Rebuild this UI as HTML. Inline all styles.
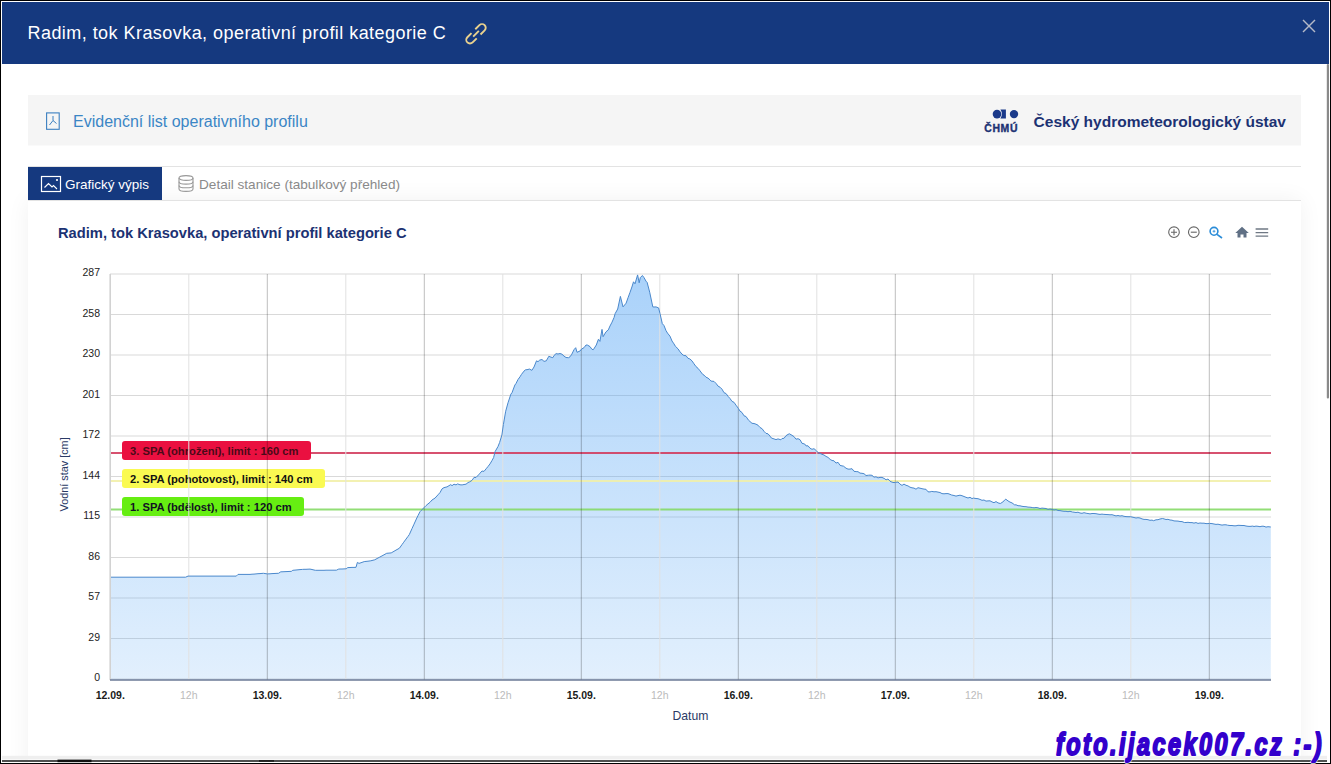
<!DOCTYPE html>
<html><head><meta charset="utf-8">
<style>
*{margin:0;padding:0;box-sizing:border-box}
html,body{width:1331px;height:764px;overflow:hidden;background:#000}
#frame{position:absolute;left:1px;top:1px;width:1329px;height:762px;background:#fff;overflow:hidden}
#card{position:absolute;left:27px;top:199px;width:1273px;height:580px;background:#fff;box-shadow:0 0 22px rgba(0,0,0,0.06)}
svg text{font-family:"Liberation Sans",sans-serif}
.dl{font-weight:bold;fill:#1a1a1a;text-anchor:middle} .hl{fill:#bbb;text-anchor:middle}
</style></head><body>
<div id="frame">
<div id="card"></div>
</div>
<svg style="position:absolute;left:0;top:0" width="1331" height="764" viewBox="0 0 1331 764">
<defs><linearGradient id="ag" x1="0" y1="0" x2="0" y2="1"><stop offset="0" stop-color="#55a5f5" stop-opacity="0.5"/><stop offset="1" stop-color="#55a5f5" stop-opacity="0.17"/></linearGradient></defs>
<!-- header -->
<rect x="2" y="2" width="1327" height="62" fill="#15397f"/>
<text x="27.5" y="38.9" font-size="18" letter-spacing="0.45" fill="#fff">Radim, tok Krasovka, operativní profil kategorie C</text>
<g transform="translate(476,33.8) rotate(45) scale(1.12)" fill="none" stroke="#ead28e" stroke-width="1.7" stroke-linecap="butt"><path d="M-3.3 -2.4 V-7.6 A3.3 3.3 0 0 1 3.3 -7.6 V-2.4"/><path d="M-3.3 2.4 V7.6 A3.3 3.3 0 0 0 3.3 7.6 V2.4"/><path d="M0 -3.6 V3.6"/></g>
<g stroke="#b4b9c8" stroke-width="1.4"><line x1="1303" y1="20" x2="1315" y2="32"/><line x1="1315" y1="20" x2="1303" y2="32"/></g>
<!-- evidence bar -->
<rect x="28" y="95" width="1273" height="50.5" fill="#f5f5f5"/>
<g fill="none" stroke="#3b7fc0"><rect x="46.6" y="112.9" width="12.6" height="16.4" stroke-width="1.1"/><path d="M53 116 L53 120.5 L49.5 125 M53 120.5 L56.5 123.5" stroke-width="1"/></g>
<text x="73" y="127" font-size="16" fill="#3b86c5">Evidenční list operativního profilu</text>
<circle cx="997" cy="114.1" r="4.3" fill="#1b3a8a"/><path d="M1000.4 109.6 Q1003.4 114.1 1000.4 118.6 L1005.9 118.6 L1005.9 109.6 Z" fill="#1b3a8a"/><circle cx="1014" cy="114.1" r="4.2" fill="#1b3a8a"/>
<text x="984.3" y="131.7" font-size="10.2" font-weight="bold" letter-spacing="0.6" fill="#1c3273" stroke="#1c3273" stroke-width="0.35" textLength="33.8" lengthAdjust="spacingAndGlyphs">ČHMÚ</text>
<text x="1286" y="126.6" font-size="15.5" font-weight="bold" fill="#1c3273" text-anchor="end">Český hydrometeorologický ústav</text>
<!-- tabs -->
<line x1="28" x2="1301" y1="166.5" y2="166.5" stroke="#e3e3e3"/>
<line x1="28" x2="1301" y1="200.5" y2="200.5" stroke="#e3e3e3"/>
<rect x="28" y="167" width="134" height="33" fill="#15397f"/>
<g fill="none" stroke="#fff"><rect x="41.5" y="176.5" width="19" height="15" stroke-width="1.2"/><path d="M44.5 187.5 L48.5 183.5 L52 187 L53.5 185.5 L57 189" stroke-width="1.1"/></g><circle cx="57" cy="180" r="1.1" fill="#fff"/>
<text x="65" y="188.5" font-size="13.5" fill="#fff">Grafický výpis</text>
<g fill="none" stroke="#999" stroke-width="1.1" transform="translate(178,175)"><ellipse cx="8" cy="3" rx="7" ry="2.4"/><path d="M1 3 V14 A7 2.4 0 0 0 15 14 V3"/><path d="M1 6.7 A7 2.4 0 0 0 15 6.7"/><path d="M1 10.4 A7 2.4 0 0 0 15 10.4"/></g>
<text x="199" y="189.1" font-size="13.6" fill="#8a8a8a">Detail stanice (tabulkový přehled)</text>
<!-- chart -->
<text x="58" y="238.2" font-size="14.7" font-weight="bold" fill="#1c3273">Radim, tok Krasovka, operativní profil kategorie C</text>
<g stroke="#000" stroke-opacity="0.15" stroke-width="1"><line x1="110" x2="1271" y1="274" y2="274"/><line x1="110" x2="1271" y1="314.5" y2="314.5"/><line x1="110" x2="1271" y1="355.0" y2="355.0"/><line x1="110" x2="1271" y1="395.5" y2="395.5"/><line x1="110" x2="1271" y1="436.0" y2="436.0"/><line x1="110" x2="1271" y1="476.5" y2="476.5"/><line x1="110" x2="1271" y1="517.0" y2="517.0"/><line x1="110" x2="1271" y1="557.5" y2="557.5"/><line x1="110" x2="1271" y1="598.0" y2="598.0"/><line x1="110" x2="1271" y1="638.5" y2="638.5"/><line x1="110" x2="1271" y1="679.0" y2="679.0"/></g>
<path d="M110.0,577.2 L110.0,577.2 L112.0,577.2 L114.0,577.2 L116.0,577.2 L118.0,577.2 L120.0,577.2 L122.0,577.2 L124.0,577.2 L126.0,577.2 L128.0,577.2 L130.0,577.2 L132.0,577.2 L134.0,577.2 L136.0,577.2 L138.0,577.2 L140.0,577.2 L142.0,577.2 L144.0,577.2 L146.0,577.2 L148.0,577.2 L150.0,577.2 L152.0,577.2 L154.0,577.2 L156.0,577.2 L158.0,577.2 L160.0,577.2 L162.0,577.2 L164.0,577.2 L166.0,577.2 L168.0,577.2 L170.0,577.2 L172.0,577.2 L174.0,577.2 L176.0,577.2 L178.0,577.2 L180.0,577.2 L182.0,577.2 L184.0,577.2 L185.6,577.2 L188.0,576.1 L188.0,576.1 L190.0,576.1 L192.0,576.1 L194.0,576.1 L196.0,576.1 L198.0,576.1 L200.0,576.1 L202.0,576.1 L204.0,576.1 L206.0,576.1 L208.0,576.1 L210.0,576.1 L212.0,576.1 L214.0,576.1 L216.0,576.1 L218.0,576.1 L220.0,576.1 L222.0,576.1 L224.0,576.1 L226.0,576.1 L228.0,576.1 L230.0,576.1 L232.0,576.1 L234.0,576.1 L236.3,576.1 L238.0,574.4 L238.0,574.4 L240.0,574.4 L242.0,574.4 L244.0,574.4 L246.0,574.4 L248.0,574.4 L250.0,574.4 L250.0,574.4 L252.0,574.2 L254.0,574.1 L256.0,573.9 L258.0,573.7 L260.0,573.6 L262.0,573.4 L263.5,573.3 L266.0,573.7 L267.3,573.9 L270.0,573.8 L272.0,573.6 L274.0,573.5 L276.0,573.4 L278.5,573.3 L280.8,571.8 L282.0,571.8 L284.0,571.7 L286.0,571.6 L288.0,571.5 L290.0,571.4 L291.3,571.4 L292.8,570.3 L294.0,570.2 L296.0,570.0 L298.0,569.8 L300.0,569.6 L302.6,569.4 L304.0,569.3 L306.0,569.3 L308.0,569.2 L310.0,569.1 L310.0,569.1 L312.0,569.5 L314.0,570.0 L315.4,570.3 L318.0,570.3 L320.0,570.3 L322.0,570.3 L324.0,570.3 L326.0,570.2 L328.0,570.2 L330.0,570.2 L332.0,570.2 L334.0,570.2 L336.4,570.2 L338.7,569.1 L340.0,569.0 L342.0,569.0 L344.0,568.9 L346.2,568.8 L347.7,567.6 L350.0,567.5 L352.0,567.4 L354.0,567.4 L356.0,567.3 L356.0,567.3 L357.4,562.4 L359.0,563.4 L362.0,562.4 L364.2,561.6 L366.0,561.4 L368.0,561.2 L370.2,560.9 L372.0,560.5 L374.7,559.8 L376.0,559.1 L378.0,558.0 L379.2,557.4 L382.0,555.9 L384.0,554.8 L386.7,553.3 L388.0,553.2 L390.0,553.0 L391.2,552.9 L394.0,551.3 L396.0,550.1 L398.0,549.0 L399.5,548.1 L402.0,544.6 L403.3,542.8 L406.0,539.1 L408.0,536.4 L409.3,534.6 L412.0,528.6 L414.0,524.2 L416.8,518.0 L418.0,515.6 L420.0,511.7 L420.0,511.7 L422.0,509.7 L424.0,507.6 L426.0,505.6 L426.0,505.6 L428.0,503.9 L430.0,502.3 L432.0,500.0 L435.0,498.1 L438.0,494.8 L440.0,492.6 L442.0,488.9 L444.0,487.6 L447.0,486.9 L450.8,484.6 L452.0,485.7 L454.0,484.2 L456.0,484.9 L457.6,483.9 L460.0,484.8 L462.1,484.9 L464.0,484.5 L466.0,484.2 L468.0,482.6 L469.6,481.9 L472.0,480.4 L474.0,477.4 L476.0,477.5 L478.6,474.8 L480.0,473.2 L482.0,471.0 L484.0,471.4 L486.1,468.8 L488.0,466.5 L490.0,463.9 L492.0,460.5 L493.6,457.6 L495.1,451.6 L498.0,446.5 L499.6,442.5 L501.9,435.0 L503.4,424.5 L505.7,411.2 L508.0,402.8 L510.9,394.1 L512.0,392.7 L514.9,385.0 L516.0,383.5 L518.0,379.5 L520.0,376.8 L521.4,374.5 L524.0,371.1 L525.3,369.9 L528.0,369.5 L529.3,369.0 L531.9,370.3 L534.0,367.0 L536.5,360.8 L538.0,361.7 L539.7,360.1 L542.0,359.5 L544.0,361.4 L546.3,360.8 L548.9,356.2 L550.0,356.8 L552.8,357.7 L554.0,355.5 L556.1,353.6 L558.0,354.0 L560.0,353.5 L562.0,354.2 L564.0,356.1 L566.0,357.5 L568.5,357.7 L570.0,356.8 L571.8,354.2 L574.0,349.7 L575.7,347.7 L577.0,352.3 L580.0,351.0 L581.6,349.0 L584.0,347.7 L586.0,345.0 L587.5,345.1 L590.0,346.6 L592.0,349.4 L593.4,349.6 L596.3,345.0 L598.4,339.3 L599.9,341.4 L602.0,329.4 L603.1,336.7 L606.0,331.8 L608.3,329.9 L610.0,326.0 L612.0,322.2 L614.1,317.4 L615.1,313.7 L617.7,309.0 L620.4,296.4 L623.0,306.9 L626.1,303.2 L628.0,297.8 L630.0,292.4 L631.9,287.0 L633.5,281.8 L635.0,283.8 L637.6,274.9 L639.2,282.8 L640.3,277.6 L642.4,275.5 L644.0,277.6 L646.0,281.2 L647.1,282.3 L649.7,292.2 L652.8,306.9 L654.0,307.0 L656.0,306.9 L658.6,307.9 L660.0,313.6 L662.3,323.6 L664.0,325.6 L666.0,330.6 L667.5,333.1 L670.0,336.2 L672.0,341.0 L674.0,343.9 L675.3,346.2 L678.0,348.8 L680.0,351.8 L682.0,354.1 L683.8,355.5 L686.0,355.7 L688.0,358.3 L689.8,358.9 L692.0,360.9 L694.0,363.8 L696.0,366.6 L698.0,368.3 L700.0,370.8 L702.6,374.3 L704.0,375.1 L706.0,377.2 L708.0,378.1 L710.0,379.9 L711.1,381.1 L714.0,381.4 L716.2,383.6 L718.0,386.1 L720.0,387.2 L722.0,389.2 L724.0,392.7 L726.0,393.5 L728.1,396.4 L730.0,398.5 L732.0,401.4 L734.0,402.3 L736.0,405.2 L738.3,408.3 L740.0,411.1 L742.0,412.5 L744.0,415.8 L746.0,416.5 L748.5,420.2 L750.0,421.5 L752.0,423.3 L754.0,423.5 L756.0,424.2 L758.0,425.2 L760.0,427.5 L762.1,428.7 L764.0,431.3 L766.0,433.4 L768.0,433.8 L770.0,436.1 L771.5,438.1 L774.0,438.9 L776.0,439.6 L778.0,438.9 L780.9,439.8 L782.0,438.5 L784.0,438.3 L786.0,435.7 L788.0,434.4 L789.4,433.8 L792.0,435.3 L794.0,436.6 L796.0,439.2 L798.0,438.7 L800.0,439.7 L802.0,443.3 L804.7,444.0 L806.0,445.9 L808.0,445.8 L810.0,448.2 L812.0,449.3 L814.0,448.7 L816.6,450.9 L818.0,452.6 L820.0,453.4 L822.0,454.3 L824.0,455.0 L826.0,456.4 L828.0,457.4 L830.2,459.4 L832.0,460.5 L834.0,460.8 L836.0,463.1 L838.0,462.3 L840.0,465.3 L842.0,465.9 L843.4,466.1 L846.0,468.2 L848.0,469.1 L850.0,469.1 L852.0,468.7 L854.0,471.3 L856.1,471.6 L858.0,471.7 L860.0,473.1 L862.0,473.3 L864.0,473.7 L866.0,475.5 L868.7,475.2 L870.0,475.1 L872.0,475.3 L874.0,477.2 L876.0,476.8 L878.0,477.9 L880.0,477.4 L882.0,477.4 L884.9,478.8 L886.0,479.9 L888.0,479.0 L890.0,481.2 L892.0,482.2 L894.0,482.6 L895.7,482.4 L898.0,482.0 L900.0,484.1 L902.0,485.4 L904.0,484.1 L906.0,485.3 L908.0,485.9 L910.0,487.2 L912.0,487.8 L914.0,488.1 L916.0,489.2 L918.0,487.7 L920.0,488.2 L922.0,488.7 L924.0,489.1 L926.0,489.3 L928.0,491.8 L930.0,491.9 L931.8,491.4 L934.0,491.8 L936.0,491.7 L938.0,492.1 L940.0,492.5 L942.0,493.6 L944.0,493.8 L946.0,493.6 L948.0,493.6 L950.0,494.3 L951.6,495.0 L954.0,495.5 L956.0,496.1 L958.0,495.6 L960.0,495.2 L962.0,495.7 L964.0,496.5 L966.0,497.3 L968.0,498.0 L970.0,497.3 L972.0,498.6 L973.3,498.1 L976.0,498.5 L978.0,498.7 L980.0,499.4 L982.0,500.3 L984.0,500.0 L986.0,501.1 L988.0,500.9 L990.0,500.8 L992.0,501.9 L994.0,502.7 L996.0,501.6 L998.0,502.9 L1000.3,503.5 L1002.0,502.5 L1004.0,500.9 L1005.7,499.1 L1008.0,500.9 L1010.0,502.1 L1012.0,502.9 L1014.7,504.9 L1016.0,504.8 L1018.0,505.7 L1020.0,505.8 L1022.0,506.3 L1024.0,506.6 L1026.0,506.7 L1028.0,507.1 L1030.0,507.2 L1032.8,507.6 L1034.0,507.8 L1036.0,507.5 L1038.0,507.8 L1040.0,508.5 L1042.0,508.1 L1044.0,508.3 L1046.0,508.5 L1048.0,509.4 L1050.0,509.0 L1052.6,509.5 L1054.0,510.0 L1056.0,509.6 L1058.0,510.5 L1060.0,510.6 L1062.0,511.0 L1064.0,511.3 L1066.0,511.3 L1068.0,511.7 L1070.0,511.3 L1072.5,512.0 L1074.0,512.2 L1076.0,512.5 L1078.0,512.2 L1080.0,513.0 L1082.0,513.3 L1084.0,512.7 L1086.9,513.4 L1088.0,513.5 L1090.0,513.9 L1092.0,513.5 L1094.0,513.5 L1096.0,513.7 L1098.0,514.1 L1100.0,514.4 L1102.0,514.1 L1103.1,514.3 L1106.0,514.5 L1108.0,514.6 L1110.0,514.8 L1112.0,514.7 L1114.0,515.3 L1116.0,515.9 L1118.0,515.5 L1120.0,516.0 L1122.0,515.7 L1124.0,516.3 L1126.0,516.6 L1128.0,516.7 L1130.2,516.7 L1132.0,517.0 L1134.0,517.5 L1136.0,518.0 L1138.0,517.7 L1140.0,518.0 L1142.0,518.9 L1144.0,519.4 L1146.0,519.4 L1148.0,519.7 L1150.0,520.3 L1152.0,520.1 L1153.6,520.7 L1156.0,519.8 L1158.0,519.7 L1160.0,519.0 L1162.6,518.5 L1164.0,518.9 L1166.0,519.5 L1168.0,519.3 L1170.0,520.0 L1172.0,520.2 L1174.0,520.9 L1176.0,521.0 L1178.0,521.1 L1180.0,521.5 L1182.0,521.6 L1184.3,522.5 L1186.0,522.5 L1188.0,522.3 L1190.0,522.6 L1192.0,522.6 L1194.0,523.1 L1196.0,522.6 L1198.0,523.4 L1200.0,523.0 L1202.0,523.2 L1204.0,523.2 L1206.0,523.6 L1208.0,523.6 L1209.5,523.4 L1212.0,523.6 L1214.0,524.0 L1216.0,524.4 L1218.0,524.2 L1220.0,524.7 L1222.0,525.1 L1224.0,524.8 L1226.0,524.8 L1227.5,525.2 L1230.0,525.5 L1232.0,525.5 L1234.0,525.8 L1236.0,525.8 L1238.0,525.3 L1240.0,525.4 L1242.0,525.5 L1244.0,525.5 L1246.0,526.0 L1248.0,526.3 L1250.0,526.4 L1252.8,526.1 L1254.0,526.5 L1256.0,526.1 L1258.0,526.3 L1260.0,526.7 L1262.0,526.2 L1264.0,526.3 L1266.0,527.1 L1268.0,526.7 L1270.8,527.0 L1270.8,680 L110,680 Z" fill="url(#ag)" stroke="none"/>
<g opacity="0.88"><line x1="110" x2="1271" y1="453" y2="453" stroke="#d23a5c" stroke-width="2"/>
<line x1="110" x2="1271" y1="481" y2="481" stroke="#f2f0a8" stroke-width="2"/>
<line x1="110" x2="1271" y1="509.5" y2="509.5" stroke="#84da64" stroke-width="2"/></g>
<g font-size="11.2" font-weight="bold">
<rect x="122" y="441" width="189" height="19" rx="3" fill="#ea1040"/><text x="130" y="455" fill="#4a0a18">3. SPA (ohrožení), limit : 160 cm</text>
<rect x="122" y="469" width="203" height="19" rx="3" fill="#fafa52"/><text x="130" y="483" fill="#111">2. SPA (pohotovost), limit : 140 cm</text>
<rect x="122" y="497" width="182" height="19" rx="3" fill="#66ee12"/><text x="130" y="511" fill="#112">1. SPA (bdělost), limit : 120 cm</text>
</g>
<g stroke="#e2e2e2" stroke-width="1"><line x1="188.8" x2="188.8" y1="274" y2="680"/><line x1="345.8" x2="345.8" y1="274" y2="680"/><line x1="502.8" x2="502.8" y1="274" y2="680"/><line x1="659.8" x2="659.8" y1="274" y2="680"/><line x1="816.8" x2="816.8" y1="274" y2="680"/><line x1="973.8" x2="973.8" y1="274" y2="680"/><line x1="1130.8" x2="1130.8" y1="274" y2="680"/></g>
<g stroke="#000" stroke-opacity="0.26" stroke-width="1"><line x1="267.3" x2="267.3" y1="274" y2="680"/><line x1="424.3" x2="424.3" y1="274" y2="680"/><line x1="581.3" x2="581.3" y1="274" y2="680"/><line x1="738.3" x2="738.3" y1="274" y2="680"/><line x1="895.3" x2="895.3" y1="274" y2="680"/><line x1="1052.3" x2="1052.3" y1="274" y2="680"/><line x1="1209.3" x2="1209.3" y1="274" y2="680"/></g>
<path d="M110.0,577.2 L110.0,577.2 L112.0,577.2 L114.0,577.2 L116.0,577.2 L118.0,577.2 L120.0,577.2 L122.0,577.2 L124.0,577.2 L126.0,577.2 L128.0,577.2 L130.0,577.2 L132.0,577.2 L134.0,577.2 L136.0,577.2 L138.0,577.2 L140.0,577.2 L142.0,577.2 L144.0,577.2 L146.0,577.2 L148.0,577.2 L150.0,577.2 L152.0,577.2 L154.0,577.2 L156.0,577.2 L158.0,577.2 L160.0,577.2 L162.0,577.2 L164.0,577.2 L166.0,577.2 L168.0,577.2 L170.0,577.2 L172.0,577.2 L174.0,577.2 L176.0,577.2 L178.0,577.2 L180.0,577.2 L182.0,577.2 L184.0,577.2 L185.6,577.2 L188.0,576.1 L188.0,576.1 L190.0,576.1 L192.0,576.1 L194.0,576.1 L196.0,576.1 L198.0,576.1 L200.0,576.1 L202.0,576.1 L204.0,576.1 L206.0,576.1 L208.0,576.1 L210.0,576.1 L212.0,576.1 L214.0,576.1 L216.0,576.1 L218.0,576.1 L220.0,576.1 L222.0,576.1 L224.0,576.1 L226.0,576.1 L228.0,576.1 L230.0,576.1 L232.0,576.1 L234.0,576.1 L236.3,576.1 L238.0,574.4 L238.0,574.4 L240.0,574.4 L242.0,574.4 L244.0,574.4 L246.0,574.4 L248.0,574.4 L250.0,574.4 L250.0,574.4 L252.0,574.2 L254.0,574.1 L256.0,573.9 L258.0,573.7 L260.0,573.6 L262.0,573.4 L263.5,573.3 L266.0,573.7 L267.3,573.9 L270.0,573.8 L272.0,573.6 L274.0,573.5 L276.0,573.4 L278.5,573.3 L280.8,571.8 L282.0,571.8 L284.0,571.7 L286.0,571.6 L288.0,571.5 L290.0,571.4 L291.3,571.4 L292.8,570.3 L294.0,570.2 L296.0,570.0 L298.0,569.8 L300.0,569.6 L302.6,569.4 L304.0,569.3 L306.0,569.3 L308.0,569.2 L310.0,569.1 L310.0,569.1 L312.0,569.5 L314.0,570.0 L315.4,570.3 L318.0,570.3 L320.0,570.3 L322.0,570.3 L324.0,570.3 L326.0,570.2 L328.0,570.2 L330.0,570.2 L332.0,570.2 L334.0,570.2 L336.4,570.2 L338.7,569.1 L340.0,569.0 L342.0,569.0 L344.0,568.9 L346.2,568.8 L347.7,567.6 L350.0,567.5 L352.0,567.4 L354.0,567.4 L356.0,567.3 L356.0,567.3 L357.4,562.4 L359.0,563.4 L362.0,562.4 L364.2,561.6 L366.0,561.4 L368.0,561.2 L370.2,560.9 L372.0,560.5 L374.7,559.8 L376.0,559.1 L378.0,558.0 L379.2,557.4 L382.0,555.9 L384.0,554.8 L386.7,553.3 L388.0,553.2 L390.0,553.0 L391.2,552.9 L394.0,551.3 L396.0,550.1 L398.0,549.0 L399.5,548.1 L402.0,544.6 L403.3,542.8 L406.0,539.1 L408.0,536.4 L409.3,534.6 L412.0,528.6 L414.0,524.2 L416.8,518.0 L418.0,515.6 L420.0,511.7 L420.0,511.7 L422.0,509.7 L424.0,507.6 L426.0,505.6 L426.0,505.6 L428.0,503.9 L430.0,502.3 L432.0,500.0 L435.0,498.1 L438.0,494.8 L440.0,492.6 L442.0,488.9 L444.0,487.6 L447.0,486.9 L450.8,484.6 L452.0,485.7 L454.0,484.2 L456.0,484.9 L457.6,483.9 L460.0,484.8 L462.1,484.9 L464.0,484.5 L466.0,484.2 L468.0,482.6 L469.6,481.9 L472.0,480.4 L474.0,477.4 L476.0,477.5 L478.6,474.8 L480.0,473.2 L482.0,471.0 L484.0,471.4 L486.1,468.8 L488.0,466.5 L490.0,463.9 L492.0,460.5 L493.6,457.6 L495.1,451.6 L498.0,446.5 L499.6,442.5 L501.9,435.0 L503.4,424.5 L505.7,411.2 L508.0,402.8 L510.9,394.1 L512.0,392.7 L514.9,385.0 L516.0,383.5 L518.0,379.5 L520.0,376.8 L521.4,374.5 L524.0,371.1 L525.3,369.9 L528.0,369.5 L529.3,369.0 L531.9,370.3 L534.0,367.0 L536.5,360.8 L538.0,361.7 L539.7,360.1 L542.0,359.5 L544.0,361.4 L546.3,360.8 L548.9,356.2 L550.0,356.8 L552.8,357.7 L554.0,355.5 L556.1,353.6 L558.0,354.0 L560.0,353.5 L562.0,354.2 L564.0,356.1 L566.0,357.5 L568.5,357.7 L570.0,356.8 L571.8,354.2 L574.0,349.7 L575.7,347.7 L577.0,352.3 L580.0,351.0 L581.6,349.0 L584.0,347.7 L586.0,345.0 L587.5,345.1 L590.0,346.6 L592.0,349.4 L593.4,349.6 L596.3,345.0 L598.4,339.3 L599.9,341.4 L602.0,329.4 L603.1,336.7 L606.0,331.8 L608.3,329.9 L610.0,326.0 L612.0,322.2 L614.1,317.4 L615.1,313.7 L617.7,309.0 L620.4,296.4 L623.0,306.9 L626.1,303.2 L628.0,297.8 L630.0,292.4 L631.9,287.0 L633.5,281.8 L635.0,283.8 L637.6,274.9 L639.2,282.8 L640.3,277.6 L642.4,275.5 L644.0,277.6 L646.0,281.2 L647.1,282.3 L649.7,292.2 L652.8,306.9 L654.0,307.0 L656.0,306.9 L658.6,307.9 L660.0,313.6 L662.3,323.6 L664.0,325.6 L666.0,330.6 L667.5,333.1 L670.0,336.2 L672.0,341.0 L674.0,343.9 L675.3,346.2 L678.0,348.8 L680.0,351.8 L682.0,354.1 L683.8,355.5 L686.0,355.7 L688.0,358.3 L689.8,358.9 L692.0,360.9 L694.0,363.8 L696.0,366.6 L698.0,368.3 L700.0,370.8 L702.6,374.3 L704.0,375.1 L706.0,377.2 L708.0,378.1 L710.0,379.9 L711.1,381.1 L714.0,381.4 L716.2,383.6 L718.0,386.1 L720.0,387.2 L722.0,389.2 L724.0,392.7 L726.0,393.5 L728.1,396.4 L730.0,398.5 L732.0,401.4 L734.0,402.3 L736.0,405.2 L738.3,408.3 L740.0,411.1 L742.0,412.5 L744.0,415.8 L746.0,416.5 L748.5,420.2 L750.0,421.5 L752.0,423.3 L754.0,423.5 L756.0,424.2 L758.0,425.2 L760.0,427.5 L762.1,428.7 L764.0,431.3 L766.0,433.4 L768.0,433.8 L770.0,436.1 L771.5,438.1 L774.0,438.9 L776.0,439.6 L778.0,438.9 L780.9,439.8 L782.0,438.5 L784.0,438.3 L786.0,435.7 L788.0,434.4 L789.4,433.8 L792.0,435.3 L794.0,436.6 L796.0,439.2 L798.0,438.7 L800.0,439.7 L802.0,443.3 L804.7,444.0 L806.0,445.9 L808.0,445.8 L810.0,448.2 L812.0,449.3 L814.0,448.7 L816.6,450.9 L818.0,452.6 L820.0,453.4 L822.0,454.3 L824.0,455.0 L826.0,456.4 L828.0,457.4 L830.2,459.4 L832.0,460.5 L834.0,460.8 L836.0,463.1 L838.0,462.3 L840.0,465.3 L842.0,465.9 L843.4,466.1 L846.0,468.2 L848.0,469.1 L850.0,469.1 L852.0,468.7 L854.0,471.3 L856.1,471.6 L858.0,471.7 L860.0,473.1 L862.0,473.3 L864.0,473.7 L866.0,475.5 L868.7,475.2 L870.0,475.1 L872.0,475.3 L874.0,477.2 L876.0,476.8 L878.0,477.9 L880.0,477.4 L882.0,477.4 L884.9,478.8 L886.0,479.9 L888.0,479.0 L890.0,481.2 L892.0,482.2 L894.0,482.6 L895.7,482.4 L898.0,482.0 L900.0,484.1 L902.0,485.4 L904.0,484.1 L906.0,485.3 L908.0,485.9 L910.0,487.2 L912.0,487.8 L914.0,488.1 L916.0,489.2 L918.0,487.7 L920.0,488.2 L922.0,488.7 L924.0,489.1 L926.0,489.3 L928.0,491.8 L930.0,491.9 L931.8,491.4 L934.0,491.8 L936.0,491.7 L938.0,492.1 L940.0,492.5 L942.0,493.6 L944.0,493.8 L946.0,493.6 L948.0,493.6 L950.0,494.3 L951.6,495.0 L954.0,495.5 L956.0,496.1 L958.0,495.6 L960.0,495.2 L962.0,495.7 L964.0,496.5 L966.0,497.3 L968.0,498.0 L970.0,497.3 L972.0,498.6 L973.3,498.1 L976.0,498.5 L978.0,498.7 L980.0,499.4 L982.0,500.3 L984.0,500.0 L986.0,501.1 L988.0,500.9 L990.0,500.8 L992.0,501.9 L994.0,502.7 L996.0,501.6 L998.0,502.9 L1000.3,503.5 L1002.0,502.5 L1004.0,500.9 L1005.7,499.1 L1008.0,500.9 L1010.0,502.1 L1012.0,502.9 L1014.7,504.9 L1016.0,504.8 L1018.0,505.7 L1020.0,505.8 L1022.0,506.3 L1024.0,506.6 L1026.0,506.7 L1028.0,507.1 L1030.0,507.2 L1032.8,507.6 L1034.0,507.8 L1036.0,507.5 L1038.0,507.8 L1040.0,508.5 L1042.0,508.1 L1044.0,508.3 L1046.0,508.5 L1048.0,509.4 L1050.0,509.0 L1052.6,509.5 L1054.0,510.0 L1056.0,509.6 L1058.0,510.5 L1060.0,510.6 L1062.0,511.0 L1064.0,511.3 L1066.0,511.3 L1068.0,511.7 L1070.0,511.3 L1072.5,512.0 L1074.0,512.2 L1076.0,512.5 L1078.0,512.2 L1080.0,513.0 L1082.0,513.3 L1084.0,512.7 L1086.9,513.4 L1088.0,513.5 L1090.0,513.9 L1092.0,513.5 L1094.0,513.5 L1096.0,513.7 L1098.0,514.1 L1100.0,514.4 L1102.0,514.1 L1103.1,514.3 L1106.0,514.5 L1108.0,514.6 L1110.0,514.8 L1112.0,514.7 L1114.0,515.3 L1116.0,515.9 L1118.0,515.5 L1120.0,516.0 L1122.0,515.7 L1124.0,516.3 L1126.0,516.6 L1128.0,516.7 L1130.2,516.7 L1132.0,517.0 L1134.0,517.5 L1136.0,518.0 L1138.0,517.7 L1140.0,518.0 L1142.0,518.9 L1144.0,519.4 L1146.0,519.4 L1148.0,519.7 L1150.0,520.3 L1152.0,520.1 L1153.6,520.7 L1156.0,519.8 L1158.0,519.7 L1160.0,519.0 L1162.6,518.5 L1164.0,518.9 L1166.0,519.5 L1168.0,519.3 L1170.0,520.0 L1172.0,520.2 L1174.0,520.9 L1176.0,521.0 L1178.0,521.1 L1180.0,521.5 L1182.0,521.6 L1184.3,522.5 L1186.0,522.5 L1188.0,522.3 L1190.0,522.6 L1192.0,522.6 L1194.0,523.1 L1196.0,522.6 L1198.0,523.4 L1200.0,523.0 L1202.0,523.2 L1204.0,523.2 L1206.0,523.6 L1208.0,523.6 L1209.5,523.4 L1212.0,523.6 L1214.0,524.0 L1216.0,524.4 L1218.0,524.2 L1220.0,524.7 L1222.0,525.1 L1224.0,524.8 L1226.0,524.8 L1227.5,525.2 L1230.0,525.5 L1232.0,525.5 L1234.0,525.8 L1236.0,525.8 L1238.0,525.3 L1240.0,525.4 L1242.0,525.5 L1244.0,525.5 L1246.0,526.0 L1248.0,526.3 L1250.0,526.4 L1252.8,526.1 L1254.0,526.5 L1256.0,526.1 L1258.0,526.3 L1260.0,526.7 L1262.0,526.2 L1264.0,526.3 L1266.0,527.1 L1268.0,526.7 L1270.8,527.0" fill="none" stroke="#4a88cc" stroke-width="1"/>
<line x1="110.2" x2="110.2" y1="274" y2="680" stroke="#d2d2d2" stroke-width="1.6"/>
<line x1="110" x2="1271" y1="680" y2="680" stroke="#6b7a96" stroke-width="1.5"/>
<g font-size="10.5" fill="#222" text-anchor="end"><text x="100" y="681.0">0</text><text x="100" y="640.5">29</text><text x="100" y="600.0">57</text><text x="100" y="559.5">86</text><text x="100" y="519.0">115</text><text x="100" y="478.5">144</text><text x="100" y="438.0">172</text><text x="100" y="397.5">201</text><text x="100" y="357.0">230</text><text x="100" y="316.5">258</text><text x="100" y="276.0">287</text></g>
<g font-size="10.5"><text x="110.3" y="699" class="dl">12.09.</text><text x="188.8" y="699" class="hl">12h</text><text x="267.3" y="699" class="dl">13.09.</text><text x="345.8" y="699" class="hl">12h</text><text x="424.3" y="699" class="dl">14.09.</text><text x="502.8" y="699" class="hl">12h</text><text x="581.3" y="699" class="dl">15.09.</text><text x="659.8" y="699" class="hl">12h</text><text x="738.3" y="699" class="dl">16.09.</text><text x="816.8" y="699" class="hl">12h</text><text x="895.3" y="699" class="dl">17.09.</text><text x="973.8" y="699" class="hl">12h</text><text x="1052.3" y="699" class="dl">18.09.</text><text x="1130.8" y="699" class="hl">12h</text><text x="1209.3" y="699" class="dl">19.09.</text></g>
<text x="690.4" y="720" font-size="12.2" fill="#2a3a66" text-anchor="middle">Datum</text>
<text transform="translate(67.6,474.4) rotate(-90)" font-size="10.85" fill="#2a3a66" text-anchor="middle">Vodní stav [cm]</text>
<g fill="none" stroke="#666" stroke-width="1.1"><circle cx="1174" cy="232.2" r="5.3"/><path d="M1171 232.2 H1177 M1174 229.2 V235.2"/><circle cx="1193.8" cy="232.2" r="5.3"/><path d="M1190.8 232.2 H1196.8"/></g>
<g fill="none" stroke="#2a8cd8" stroke-width="1.6"><circle cx="1214" cy="231.3" r="3.9"/><path d="M1217 234.3 L1222 238"/></g><path d="M1212.6 231.3 H1215.4 M1214 229.9 V232.7" stroke="#2a8cd8" stroke-width="0.8"/>
<path d="M1242 226.8 L1235.3 233 H1237.5 V237.6 H1240.5 V234.5 H1243.5 V237.6 H1246.5 V233 H1248.8 Z" fill="#607085"/>
<g stroke="#6f7884" stroke-width="1.3"><path d="M1255.6 229 H1268.2 M1255.6 232.6 H1268.2 M1255.6 236.2 H1268.2"/></g>
<!-- bottom -->
<rect x="1326.8" y="64" width="2.2" height="334.5" rx="1" fill="#8a8a8a"/>
<rect x="2" y="755.8" width="1325" height="3.6" fill="#efefef"/>
<rect x="2" y="760" width="1325" height="2" fill="#505050"/>
<rect x="57.5" y="759.6" width="34" height="2.6" fill="#111"/>
<rect x="259" y="760" width="15" height="1.8" fill="#222"/>
<g transform="translate(1056,755) scale(0.9,1.18)">
<text x="0" y="0" font-size="26" font-weight="bold" font-style="italic" fill="#3300cc" stroke="#fff" stroke-width="3" stroke-linejoin="round" opacity="0.9" textLength="295" lengthAdjust="spacing">foto.ijacek007.cz :-)</text>
<text x="0" y="0" font-size="26" font-weight="bold" font-style="italic" fill="#3300cc" stroke="#3300cc" stroke-width="1.7" stroke-linejoin="round" textLength="295" lengthAdjust="spacing">foto.ijacek007.cz :-)</text>
</g>
</svg>
</body></html>
